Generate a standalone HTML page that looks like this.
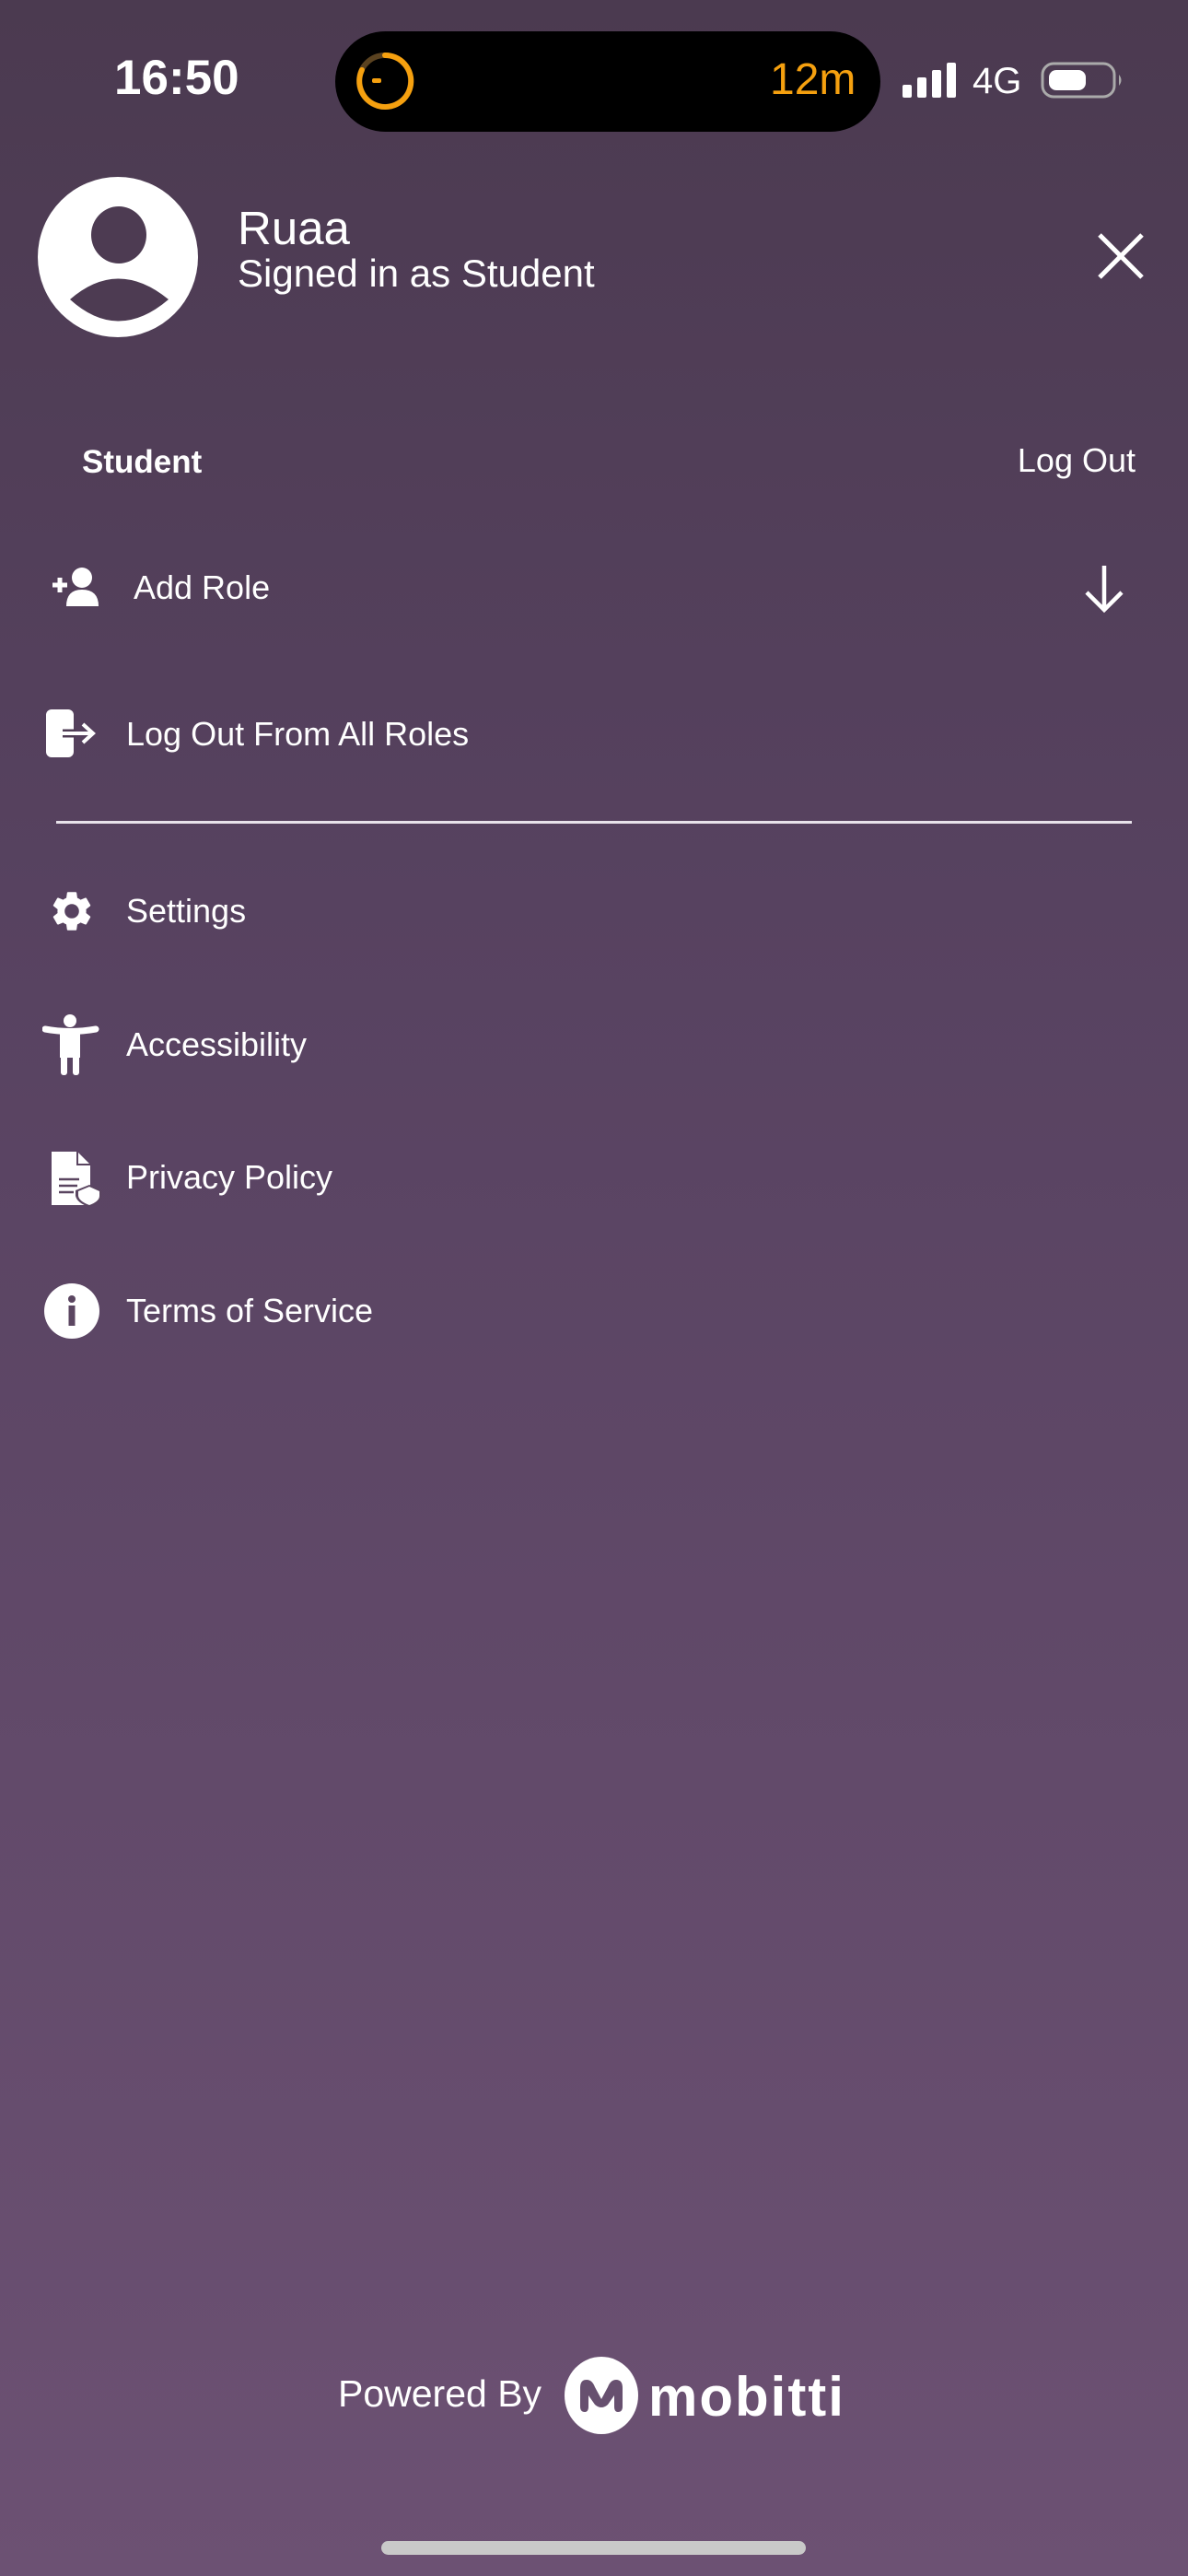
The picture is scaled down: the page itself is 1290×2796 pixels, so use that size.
<!DOCTYPE html>
<html><head><meta charset="utf-8"><style>
*{margin:0;padding:0;box-sizing:border-box}
html,body{width:1290px;height:2796px;overflow:hidden}
body{background:linear-gradient(180deg,#4b3a50 0%,#574260 35%,#6c5173 100%);font-family:"Liberation Sans",sans-serif;color:#fff;position:relative}
.a{position:absolute;white-space:nowrap}
.t{font-size:36px;line-height:1}
</style></head><body>
<div class="a" style="left:124px;top:58px;font-size:53px;font-weight:bold;line-height:1">16:50</div>
<div class="a" style="left:364px;top:34px;width:592px;height:109px;background:#000;border-radius:55px"></div>
<svg class="a" style="left:380px;top:50px" width="76" height="76" viewBox="0 0 76 76"><circle cx="38" cy="38" r="28" fill="none" stroke="#5a4220" stroke-width="6"/><path d="M38 10 A28 28 0 1 1 13 26" fill="none" stroke="#f5a00f" stroke-width="6" stroke-linecap="round"/><rect x="24" y="35" width="10" height="5" rx="2" fill="#f5a00f"/></svg>
<div class="a" style="left:836px;top:63px;font-size:48px;color:#f5a00f;line-height:1">12m</div>
<svg class="a" style="left:978px;top:66px" width="64" height="42"><rect x="2" y="26" width="10" height="14" rx="2" fill="#fff"/><rect x="18" y="18" width="10" height="22" rx="2" fill="#fff"/><rect x="34" y="10" width="10" height="30" rx="2" fill="#fff"/><rect x="50" y="2" width="10" height="38" rx="2" fill="#fff"/></svg>
<div class="a" style="left:1056px;top:68px;font-size:40px;line-height:1">4G</div>
<svg class="a" style="left:1130px;top:66px" width="92" height="42"><rect x="2" y="3" width="78" height="36" rx="12" fill="none" stroke="#aaa" stroke-width="3"/><rect x="9" y="10" width="40" height="22" rx="8" fill="#fff"/><path d="M85 15 Q90 21 85 27Z" fill="#aaa"/></svg>

<svg class="a" style="left:41px;top:192px" width="174" height="174" viewBox="41 192 174 174"><circle cx="128" cy="279" r="87" fill="#fff"/><ellipse cx="129" cy="255" rx="30" ry="31" fill="#4d3b52"/><path d="M76 325 Q128 280 183 325 Q128 372 76 325Z" fill="#4d3b52"/></svg>
<div class="a" style="left:258px;top:222px;font-size:51px;line-height:1">Ruaa</div>
<div class="a" style="left:258px;top:276px;font-size:42px;line-height:1">Signed in as Student</div>
<svg class="a" style="left:1190px;top:251px" width="54" height="54"><path d="M4 4L50 50M50 4L4 50" stroke="#fff" stroke-width="5"/></svg>

<div class="a t" style="left:89px;top:484px;font-weight:bold;font-size:35px">Student</div>
<div class="a t" style="right:57px;top:482px">Log Out</div>

<svg class="a" style="left:54px;top:614px" width="60" height="46" viewBox="0 0 60 46"><path d="M3 21H19M11 13V29" stroke="#fff" stroke-width="5"/><circle cx="35" cy="13" r="11" fill="#fff"/><path d="M18 44Q18 26 35 26Q53 26 53 44Z" fill="#fff"/></svg>
<div class="a t" style="left:145px;top:620px">Add Role</div>
<svg class="a" style="left:1174px;top:612px" width="50" height="54"><path d="M25 2V50M6 31L25 50L44 31" fill="none" stroke="#fff" stroke-width="4.5"/></svg>

<svg class="a" style="left:48px;top:768px" width="60" height="56"><rect x="2" y="2" width="30" height="52" rx="6" fill="#fff"/><path d="M18 28H52M42 18L53 28L42 38" fill="none" stroke="#fff" stroke-width="4"/><path d="M20 28H34" stroke="#4f3c54" stroke-width="9"/><path d="M20 28H50" stroke="#fff" stroke-width="4"/></svg>
<div class="a t" style="left:137px;top:779px">Log Out From All Roles</div>

<div class="a" style="left:61px;top:891px;width:1168px;height:3px;background:#e8e2ea"></div>

<svg class="a" style="left:52px;top:962px" width="52" height="54" viewBox="0 0 24 24"><path fill="#fff" d="M19.14 12.94c.04-.3.06-.61.06-.94 0-.32-.02-.64-.07-.94l2.03-1.58a.49.49 0 0 0 .12-.61l-1.920-3.32a.49.49 0 0 0-.59-.22l-2.39.96c-.5-.38-1.03-.7-1.62-.94l-.36-2.54a.48.48 0 0 0-.48-.41h-3.84c-.24 0-.43.17-.47.41l-.36 2.54c-.59.24-1.130.57-1.62.94l-2.39-.96a.48.48 0 0 0-.59.22L2.74 8.87c-.12.21-.08.47.12.61l2.03 1.58c-.05.3-.09.63-.09.94s.02.64.07.94l-2.03 1.58a.49.49 0 0 0-.12.61l1.92 3.32c.12.22.37.29.59.22l2.39-.96c.5.38 1.03.7 1.62.94l.36 2.54c.05.24.24.41.48.41h3.84c.24 0 .44-.17.47-.41l.36-2.54c.59-.24 1.13-.56 1.62-.94l2.39.96c.22.08.47 0 .59-.22l1.92-3.32c.12-.22.07-.47-.12-.61l-2.01-1.58zM12 15.6A3.6 3.6 0 1 1 12 8.4a3.6 3.6 0 0 1 0 7.2z"/></svg>
<div class="a t" style="left:137px;top:971px">Settings</div>

<svg class="a" style="left:46px;top:1100px" width="64" height="68" viewBox="0 0 64 68"><circle cx="30" cy="8" r="7" fill="#fff"/><path d="M3 17Q30 22 58 17" stroke="#fff" stroke-width="7" stroke-linecap="round" fill="none"/><rect x="19" y="20" width="22" height="28" fill="#fff"/><rect x="20" y="42" width="7" height="25" rx="3" fill="#fff"/><rect x="33" y="42" width="7" height="25" rx="3" fill="#fff"/></svg>
<div class="a t" style="left:137px;top:1116px">Accessibility</div>

<svg class="a" style="left:54px;top:1248px" width="56" height="62" viewBox="0 0 56 62"><path d="M2 2H30L44 16V60H2Z" fill="#fff"/><path d="M30 2V16H44" fill="none" stroke="#5a4560" stroke-width="2"/><path d="M10 32H32M10 39H30M10 46H26" stroke="#5a4560" stroke-width="2.5"/><path d="M28 44L43 38L56 44V50Q56 58 43 62Q30 58 28 50Z" fill="#5a4560"/><path d="M31 45L43 40L54 45V50Q54 56 43 60Q32 56 31 50Z" fill="#fff"/></svg>
<div class="a t" style="left:137px;top:1260px">Privacy Policy</div>

<svg class="a" style="left:47px;top:1392px" width="62" height="62"><circle cx="31" cy="31" r="30" fill="#fff"/><circle cx="31" cy="18" r="4" fill="#5b4661"/><rect x="27.5" y="25" width="7" height="22" fill="#5b4661"/></svg>
<div class="a t" style="left:137px;top:1405px">Terms of Service</div>

<div class="a" style="left:367px;top:2578px;font-size:41px;line-height:1">Powered By</div>
<svg class="a" style="left:612px;top:2558px" width="82" height="84" viewBox="0 0 82 84"><ellipse cx="41" cy="42" rx="40" ry="42" fill="#fff"/><path d="M18 54V34Q18 25 25 25Q31 25 34 33L41 46L48 33Q51 25 57 25Q64 25 64 34V54Q64 60 59 60Q55 60 55 54V42L48 52Q41 58 34 52L27 42V54Q27 60 23 60Q18 60 18 54Z" fill="#67506f"/><circle cx="41" cy="36" r="4" fill="#fff"/></svg>
<div class="a" style="left:704px;top:2572px;font-size:60px;font-weight:bold;line-height:1;letter-spacing:2px">mobitti</div>

<div class="a" style="left:414px;top:2758px;width:461px;height:15px;border-radius:8px;background:#c9c9c9"></div>
</body></html>
